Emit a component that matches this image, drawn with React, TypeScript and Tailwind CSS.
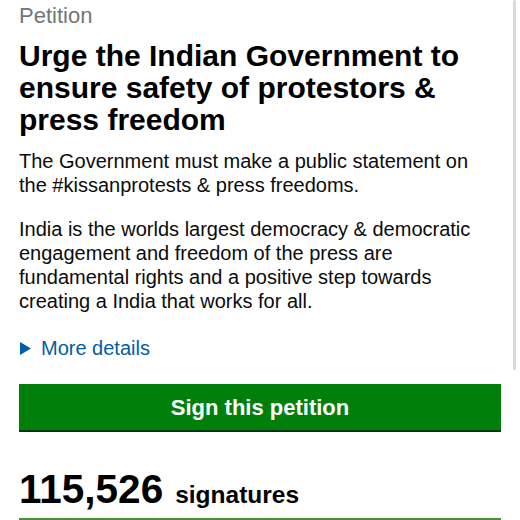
import React from 'react';

export default function App() {
  return (
    <div className="relative h-[520px] w-[520px] overflow-hidden bg-white font-['Liberation_Sans',Arial,sans-serif] text-[#0b0c0c]">
      <div className="px-[19px] pt-[2px]">
        <p className="text-[22px] leading-[28px] text-[#6f777b]">Petition</p>
        <h1 className="mt-[10px] text-[30px] font-bold leading-[32px] text-black">
          Urge the Indian Government to ensure safety of protestors &amp; press freedom
        </h1>
        <p className="mt-[13px] text-[20px] leading-[24px]">
          The Government must make a public statement on the #kissanprotests &amp; press freedoms.
        </p>
        <p className="mt-[20px] text-[20px] leading-[24px]">
          India is the worlds largest democracy &amp; democratic engagement and freedom of the press are
          fundamental rights and a positive step towards creating a India that works for all.
        </p>
        <div className="mt-[23px] flex items-center gap-[9px] text-[20px] leading-[24px] text-[#005ea5]">
          <svg width="12" height="13" viewBox="0 0 12 13" className="ml-[1px]">
            <path d="M0 0 L11 6.5 L0 13 Z" fill="#005ea5" />
          </svg>
          <span>More details</span>
        </div>
        <button
          type="button"
          className="mt-[24px] block h-[48px] w-full border-b-2 border-[#003618] bg-[#00800a] pt-[1px] text-center text-[22px] font-bold leading-[45px] text-white"
        >
          Sign this petition
        </button>
        <div className="mt-[37px] flex h-[40px] items-baseline gap-[12px] leading-[40px]">
          <span className="text-[40.5px] font-bold text-black">115,526</span>
          <span className="text-[24.5px] font-bold leading-[40px] text-black">signatures</span>
        </div>
        <div className="mt-[9px] h-[2px] w-full bg-[#4a8f35]" />
      </div>
      <div className="absolute right-[4px] top-0 h-[370px] w-[3px] rounded-full bg-[#d9d9d9]" />
    </div>
  );
}
